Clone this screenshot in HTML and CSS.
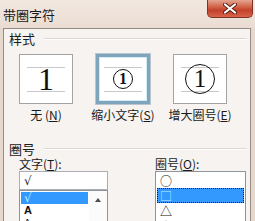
FILE: index.html
```html
<!DOCTYPE html>
<html lang="zh-CN">

<head>
    <meta charset="UTF-8">
    <title>带圈字符</title>
    <link rel="stylesheet" href="styles.css">
</head>

<body>
    <div class="window">
        <div class="titlebar">
            <span class="title">带圈字符</span>
            <button class="close">
                <svg width="14" height="11" viewBox="0 0 14 11">
                    <path d="M2 1.5 L12 9.5 M12 1.5 L2 9.5" stroke="#5a1f16" stroke-width="4" stroke-linecap="round"/>
                    <path d="M2 1.5 L12 9.5 M12 1.5 L2 9.5" stroke="#fff" stroke-width="2.2" stroke-linecap="round"/>
                </svg>
            </button>
        </div>

        <div class="dialog">
            <div class="group-head">
                <span>样式</span>
                <i class="rule"></i>
            </div>

            <div class="styles">
                <div class="opt">
                    <div class="preview">
                        <div class="guide"><span class="plain">1</span></div>
                    </div>
                    <div class="cap">无 (<u>N</u>)</div>
                </div>
                <div class="opt">
                    <div class="preview selected">
                        <div class="guide"><span class="ring small">1</span></div>
                    </div>
                    <div class="cap">缩小文字(<u>S</u>)</div>
                </div>
                <div class="opt">
                    <div class="preview">
                        <div class="guide"><span class="ring big">1</span></div>
                    </div>
                    <div class="cap">增大圈号(<u>E</u>)</div>
                </div>
            </div>

            <div class="group-head second">
                <span>圈号</span>
                <i class="rule"></i>
            </div>

            <div class="pickers">
                <div class="col text-col">
                    <div class="lbl">文字(<u>T</u>):</div>
                    <div class="input">√</div>
                    <div class="list">
                        <div class="rows">
                            <div class="row sel check">√</div>
                            <div class="row bold">A</div>
                            <div class="row">A</div>
                        </div>
                        <div class="scroll"><span class="arrow"></span></div>
                    </div>
                </div>
                <div class="col ring-col">
                    <div class="lbl">圈号(<u>O</u>):</div>
                    <div class="list tall">
                        <div class="rows">
                            <div class="row">○</div>
                            <div class="row sel focus">□</div>
                            <div class="row">△</div>
                            <div class="row faded">◇</div>
                        </div>
                    </div>
                </div>
            </div>
        </div>
    </div>
</body>

</html>
```

FILE: styles.css
```css
* {
    margin: 0;
    padding: 0;
    box-sizing: border-box;
}

body {
    width: 255px;
    height: 221px;
    overflow: hidden;
    font-family: "Noto Sans CJK SC", "Liberation Sans", sans-serif;
    color: #1a1a1a;
}

.window {
    width: 255px;
    height: 221px;
    display: flex;
    flex-direction: column;
    background: #e6d8cd;
    overflow: hidden;
}

.titlebar {
    height: 28px;
    flex-shrink: 0;
    display: flex;
    justify-content: space-between;
    align-items: flex-start;
    padding-left: 3px;
    background: linear-gradient(#f2e8e1, #eadcd2);
}

.title {
    margin-top: 8px;
    font-size: 13px;
    line-height: 14px;
}

.close {
    width: 46px;
    height: 18px;
    margin-right: 2px;
    border: 1px solid #7d3326;
    border-top: none;
    border-radius: 0 0 5px 5px;
    background: linear-gradient(#e4a592, #cf5a40 45%, #c2412a 60%, #d8644a);
    display: flex;
    align-items: center;
    justify-content: center;
}

.dialog {
    flex: 1;
    min-height: 0;
    overflow: hidden;
    width: 248px;
    margin-left: 3px;
    background: #f6f3f0;
    border: 1px solid #978c85;
    border-bottom: none;
}

.group-head {
    height: 16px;
    margin-top: 2px;
    padding-left: 5px;
    display: flex;
    align-items: center;
    font-size: 13px;
    line-height: 16px;
}

.group-head.second {
    margin-top: 20px;
}

.rule {
    flex: 1;
    height: 2px;
    margin: 0 3px 0 9px;
    border-top: 1px solid #dcd7d2;
    border-bottom: 1px solid #ffffff;
}

.styles {
    display: flex;
    gap: 23px;
    padding-left: 15px;
    margin-top: 7px;
}

.opt {
    width: 54px;
    display: flex;
    flex-direction: column;
    align-items: center;
}

.preview {
    width: 54px;
    height: 50px;
    background: #fff;
    border: 1px solid #a3a3a3;
    display: flex;
    align-items: center;
    justify-content: center;
}

.preview.selected {
    border: 3px solid #7ea5bb;
    box-shadow: inset 0 0 0 1px #d4edf5, 0 0 0 1px #b9c6cd;
}

.guide {
    width: 38px;
    height: 25px;
    border-top: 1px solid #c9c9c9;
    border-bottom: 1px solid #c9c9c9;
    display: flex;
    align-items: center;
    justify-content: center;
}

.plain {
    font-family: "Liberation Serif", serif;
    font-size: 32px;
    line-height: 1;
    color: #111;
}

.ring {
    border: 1.4px solid #111;
    border-radius: 50%;
    display: flex;
    align-items: center;
    justify-content: center;
    flex-shrink: 0;
    color: #111;
    font-family: "Liberation Serif", serif;
}

.ring.small {
    width: 20px;
    height: 20px;
    font-size: 16px;
    font-weight: bold;
}

.ring.big {
    width: 30px;
    height: 30px;
    font-size: 25px;
}

.cap {
    margin-top: 4px;
    font-size: 12px;
    line-height: 13px;
    white-space: nowrap;
}

u {
    text-decoration: underline;
}

.pickers {
    display: flex;
    gap: 47px;
    padding-left: 15px;
}

.lbl {
    font-size: 12px;
    line-height: 13px;
    white-space: nowrap;
}

.text-col {
    width: 89px;
}

.ring-col {
    width: 91px;
}

.input {
    height: 19px;
    margin-top: 1px;
    background: #fff;
    border: 1px solid #abadb3;
    padding-left: 4px;
    font-family: "DejaVu Sans", sans-serif;
    font-size: 12px;
    line-height: 18px;
}

.list {
    height: 40px;
    background: #fff;
    border: 1px solid #8f939a;
    border-bottom: none;
    display: flex;
}

.list.tall {
    height: 60px;
    margin-top: 1px;
}

.rows {
    flex: 1;
    padding-top: 1px;
}

.row {
    height: 12px;
    margin: 0 1px;
    padding-left: 3px;
    font-size: 11px;
    line-height: 12px;
    color: #111;
    overflow: hidden;
}

.row.check {
    font-family: "DejaVu Sans", sans-serif;
    font-size: 12px;
    line-height: 13px;
}

.tall .row {
    height: 15px;
    font-size: 12px;
    line-height: 15px;
}

.row.bold {
    font-weight: bold;
    font-family: "Liberation Sans", sans-serif;
}

.row.sel {
    background: #3399ff;
    color: #b8f0ff;
}

.row.focus {
    border: 1px dotted #1a1a1a;
    padding-left: 2px;
    line-height: 13px;
}

.row.faded {
    color: #c8c8c8;
}

.scroll {
    width: 18px;
    background: #fbfbfb;
    display: flex;
    justify-content: center;
    padding-top: 7px;
}

.arrow {
    width: 0;
    height: 0;
    border-left: 3.5px solid transparent;
    border-right: 3.5px solid transparent;
    border-bottom: 4px solid #4d4d4d;
}
```
